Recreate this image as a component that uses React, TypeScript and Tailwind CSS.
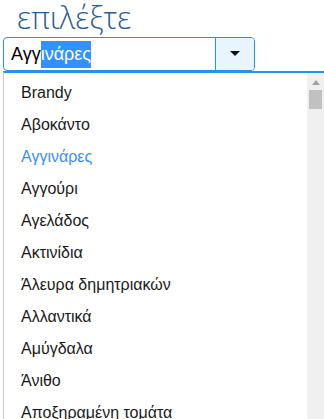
import React from 'react';

const items = [
  'Brandy',
  'Αβοκάντο',
  'Αγγινάρες',
  'Αγγούρι',
  'Αγελάδος',
  'Ακτινίδια',
  'Άλευρα δημητριακών',
  'Αλλαντικά',
  'Αμύγδαλα',
  'Άνιθο',
  'Αποξηραμένη τομάτα',
  'Αρακάς',
];

const App: React.FC = () => {
  return (
    <div
      className="w-[324px] h-[419px] overflow-hidden bg-white"
      style={{ fontFamily: '"Liberation Sans", Arial, sans-serif' }}
    >
      <h1
        className="pl-[17px] h-[37px] text-[31px] leading-[34px] text-[#2a5d90] font-light"
        style={{ fontFamily: '"Open Sans", sans-serif' }}
      >
        επιλέξτε
      </h1>

      <div className="ml-[3px] w-[252px] h-[34px] flex border border-[#2293f0] rounded-[4px] bg-white">
        <div className="flex-1 flex items-center pl-[7px] text-[18px] text-black">
          <span>Αγγ</span>
          <span className="bg-[#3390ff] text-white">ινάρες</span>
        </div>
        <div className="w-[39px] flex items-center justify-center border-l border-[#2293f0] bg-[#e8f4fe] rounded-r-[3px]">
          <svg width="10" height="6" viewBox="0 0 10 6">
            <path d="M0 0 L10 0 L5 5 Z" fill="#111" />
          </svg>
        </div>
      </div>

      <div className="ml-[3px] flex border-t-2 border-t-[#2293f0] border-l border-l-[#c8c8c8] h-[360px]">
        <div className="flex-1 pt-[4px]">
          {items.map((item, i) => (
            <div
              key={item}
              className={`h-[32px] pl-[17px] flex items-center text-[16px] whitespace-nowrap ${
                i === 2 ? 'text-[#3b8ef2]' : 'text-[#1a1a1a]'
              }`}
            >
              {item}
            </div>
          ))}
        </div>
        <div className="w-[17px] bg-[#f0f0f0] flex flex-col items-center">
          <div className="h-[16px] flex items-center justify-center mt-[1px]">
            <svg width="8" height="5" viewBox="0 0 8 5">
              <path d="M0 5 L8 5 L4 0 Z" fill="#a3a3a3" />
            </svg>
          </div>
          <div className="w-[13px] h-[19px] bg-[#c1c1c1]" />
          <div className="flex-1" />
        </div>
      </div>
    </div>
  );
};

export default App;
